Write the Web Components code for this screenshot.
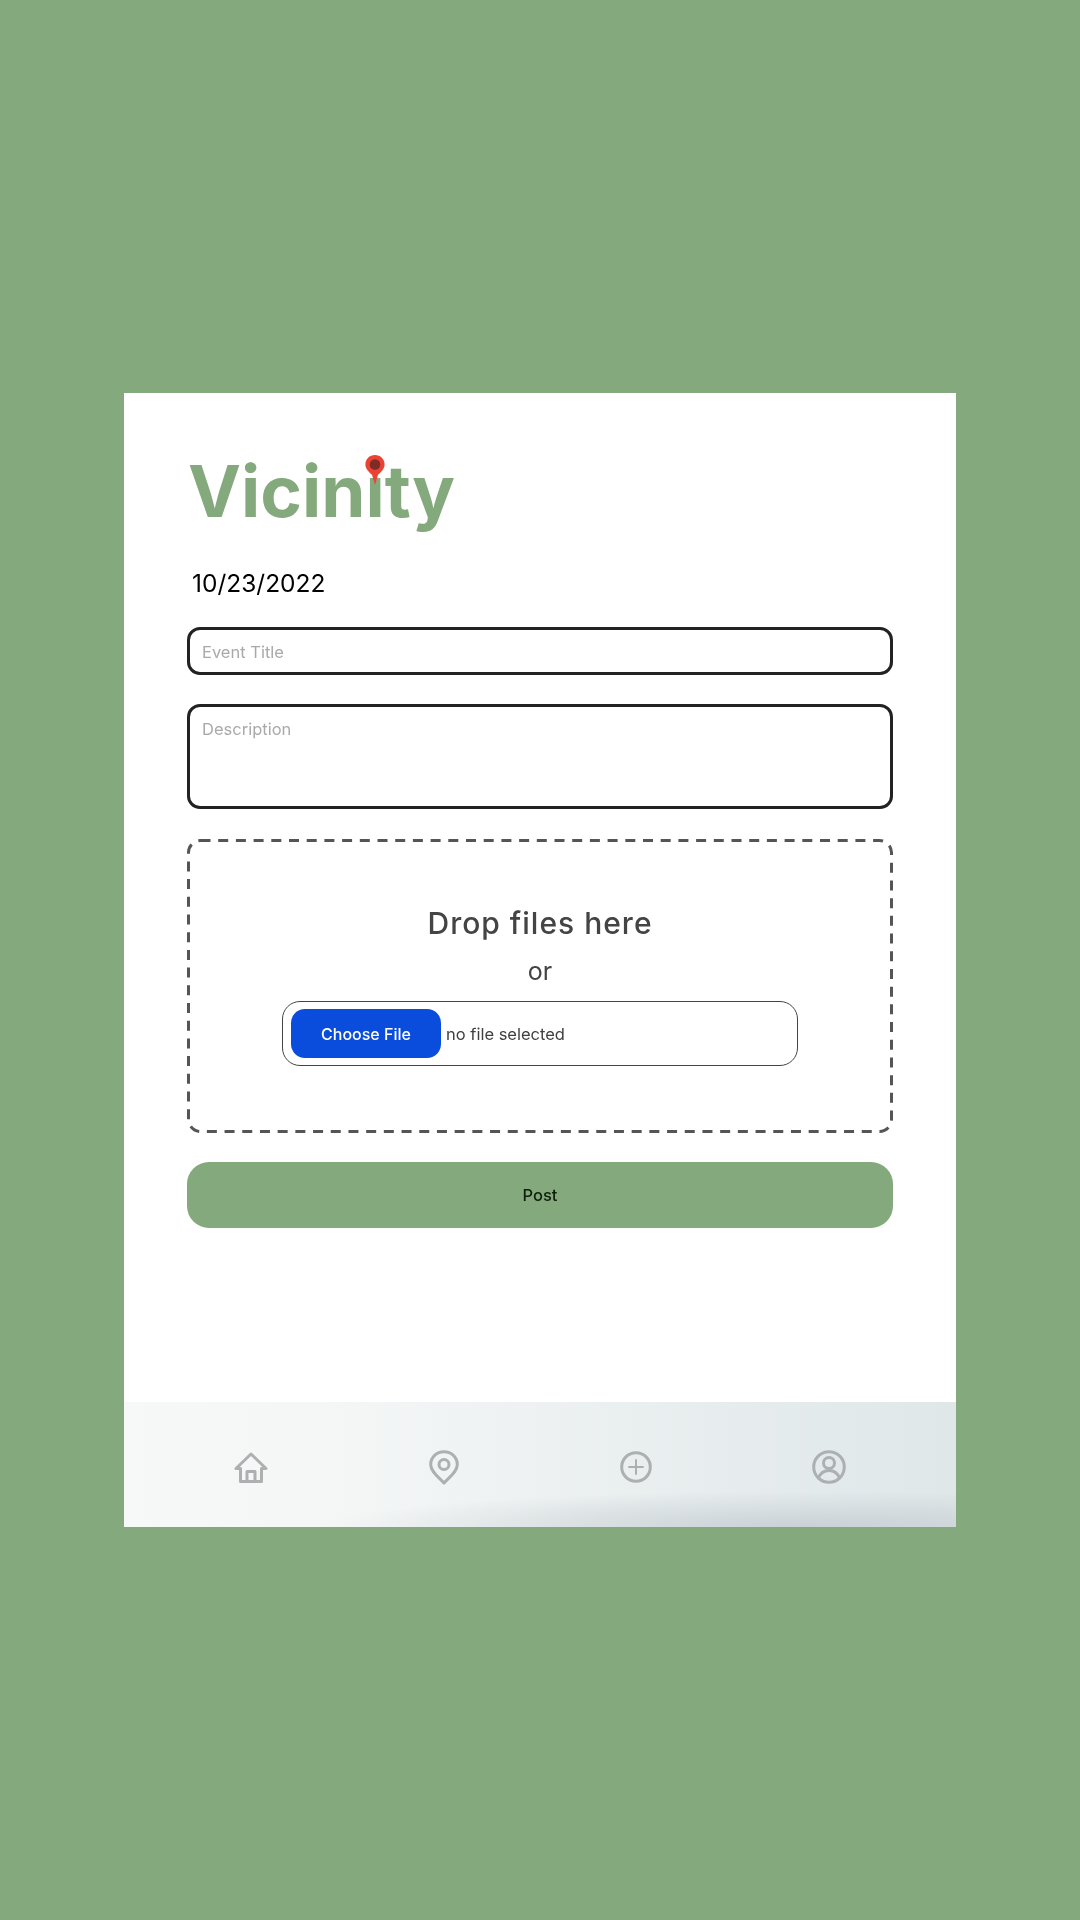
<!DOCTYPE html>
<html>
<head>
<meta charset="utf-8">
<title>Vicinity</title>
<style>
    html, body { margin: 0; height: 100%; }
    body { background: #84a97c; font-family: Inter, "Liberation Sans", sans-serif; }
</style>
</head>
<body>
<vicinity-app>
    <vicinity-logo>Vicinity</vicinity-logo>
    <event-date>10/23/2022</event-date>
    <text-field>Event Title</text-field>
    <text-field tall>Description</text-field>
    <drop-zone>
        <file-picker>no file selected</file-picker>
    </drop-zone>
    <post-button>Post</post-button>
    <tab-bar slot="footer"></tab-bar>
</vicinity-app>

<script>
// Contenedor principal: panel blanco centrado sobre el fondo verde
class VicinityApp extends HTMLElement {
    constructor() {
        super();
        this.attachShadow({ mode: 'open' });
        this.shadowRoot.innerHTML = `
            <style>
                :host { display: flex; height: 1920px; align-items: center; justify-content: center; }
                .panel { width: 832px; height: 1134px; background: #fff; display: flex; flex-direction: column; }
                .form { flex: 1; display: flex; flex-direction: column; padding: 0 63px; filter: blur(.3px); }
            </style>
            <div class="panel">
                <div class="form"><slot></slot></div>
                <slot name="footer"></slot>
            </div>
        `;
    }
}
customElements.define('vicinity-app', VicinityApp);

class VicinityLogo extends HTMLElement {
    constructor() {
        super();
        this.attachShadow({ mode: 'open' });
        this.shadowRoot.innerHTML = `
            <style>
                :host { display: block; position: relative; height: 84px; margin: 56px 0 0 1px; filter: blur(.3px); }
                .word { display: block; font: 700 71px/84px Inter, "Liberation Sans", sans-serif; color: #84a97c; white-space: nowrap; }
                svg { position: absolute; left: 177px; top: 6px; }
            </style>
            <span class="word"><slot></slot></span>
            <svg width="20" height="30" viewBox="0 0 20 30">
                <path d="M10 0C4.500 0 .4 4.200 .4 9.400c0 4.600 4.200 8 6.600 10.400L10 30l3-10.200c2.400-2.400 6.600-5.800 6.600-10.400C19.600 4.200 15.500 0 10 0z" fill="#ea4335"/>
                <circle cx="10" cy="9.500" r="5.300" fill="#7f2b26"/>
            </svg>
        `;
    }
}
customElements.define('vicinity-logo', VicinityLogo);

class EventDate extends HTMLElement {
    constructor() {
        super();
        this.attachShadow({ mode: 'open' });
        this.shadowRoot.innerHTML = `
            <style>
                :host { display: block; margin: 35px 0 0 5px; font: 400 24.500px/30px Inter, "Liberation Sans", sans-serif; color: #000; }
            </style>
            <slot></slot>
        `;
    }
}
customElements.define('event-date', EventDate);

// Campo de texto (con el atributo tall hace de descripcion)
class TextField extends HTMLElement {
    constructor() {
        super();
        this.attachShadow({ mode: 'open' });
        this.shadowRoot.innerHTML = `
            <style>
                :host { display: block; box-sizing: border-box; height: 48px; margin-top: 29px; padding: 12px 12px 0; border: 3.500px solid #222; border-radius: 13px; font: 400 16.500px/20px Inter, "Liberation Sans", sans-serif; color: #a9a9a9; }
                :host([tall]) { height: 105px; }
            </style>
            <slot></slot>
        `;
    }
}
customElements.define('text-field', TextField);

class DropZone extends HTMLElement {
    constructor() {
        super();
        this.attachShadow({ mode: 'open' });
        this.shadowRoot.innerHTML = `
            <style>
                :host { display: flex; flex-direction: column; align-items: center; position: relative; box-sizing: border-box; height: 294px; margin-top: 30px; padding-top: 65px; }
                svg { position: absolute; inset: 0; width: 100%; height: 100%; }
                h2 { margin: 0; font: 500 30px/38px Inter, "Liberation Sans", sans-serif; letter-spacing: 1px; color: #444; }
                p { margin: 13.500px 0 15.500px; font: 400 25px/30px Inter, "Liberation Sans", sans-serif; color: #444; }
            </style>
            <svg viewBox="0 0 706 294" fill="none">
                <rect x="1.500" y="1.500" width="703" height="291" rx="12" stroke="#555" stroke-width="3" stroke-dasharray="10 7.700"/>
            </svg>
            <h2>Drop files here</h2>
            <p>or</p>
            <slot></slot>
        `;
    }
}
customElements.define('drop-zone', DropZone);

class FilePicker extends HTMLElement {
    constructor() {
        super();
        this.attachShadow({ mode: 'open' });
        this.shadowRoot.innerHTML = `
            <style>
                :host { display: flex; align-items: center; box-sizing: border-box; width: 516px; height: 65px; padding: 0 8px; border: 1.500px solid #444; border-radius: 18px; font: 400 16.500px/20px Inter, "Liberation Sans", sans-serif; color: #3f3f3f; background: #fff; }
                .btn { width: 150px; height: 49px; margin-right: 5px; display: flex; align-items: center; justify-content: center; background: #0a4ddc; color: #fff; border-radius: 14px; font-size: 16px; font-weight: 500; }
            </style>
            <span class="btn">Choose File</span>
            <slot></slot>
        `;
    }
}
customElements.define('file-picker', FilePicker);

class PostButton extends HTMLElement {
    constructor() {
        super();
        this.attachShadow({ mode: 'open' });
        this.shadowRoot.innerHTML = `
            <style>
                :host { display: flex; align-items: center; justify-content: center; height: 66px; margin-top: 29px; background: #84a97c; border-radius: 22px; font: 500 16.500px/20px Inter, "Liberation Sans", sans-serif; color: #0f1f0c; }
            </style>
            <slot></slot>
        `;
    }
}
customElements.define('post-button', PostButton);

// Iconos de la barra inferior
const ICONOS = [
    { w: 34, h: 31, box: '0 0 34 31', d: '<path d="M2 16.500L17 2l15 14.500h-4.500V29.500h-21V16.500z"/><path d="M13 29.500V19.500h8V29.500"/>' },
    { w: 30, h: 35, box: '0 0 30 35', d: '<path d="M15 33C11 28 1.700 22.500 1.700 14.500 1.700 7.200 7.700 1.700 15 1.700s13.300 5.500 13.300 12.800C28.300 22.500 19 28 15 33z"/><circle cx="15" cy="14.500" r="5"/>' },
    { w: 32, h: 32, box: '0 0 32 32', d: '<circle cx="16" cy="16" r="14.300"/><path stroke-width="2" d="M16 9v14M9 16h14"/>' },
    { w: 34, h: 34, box: '0 0 34 34', d: '<circle cx="17" cy="17" r="15.300"/><circle cx="17" cy="13" r="5.500"/><path d="M6.500 28c2-5 6-7.500 10.500-7.500S25.500 23 27.500 28"/>' }
];

class TabBar extends HTMLElement {
    constructor() {
        super();
        this.attachShadow({ mode: 'open' });
        this.shadowRoot.innerHTML = `
            <style>
                :host { display: grid; grid-template-columns: repeat(4, 1fr); box-sizing: border-box; height: 125px; padding: 5px 31px 0;
                    background:
                        radial-gradient(ellipse 480px 36px at 82% 100%, rgba(195,203,207,.8), rgba(195,203,207,0)),
                        linear-gradient(90deg, #f7f8f8 0%, #f4f6f6 28%, #eaeff0 60%, #dfe7e9 100%); }
                .tab { display: flex; align-items: center; justify-content: center; }
                svg { fill: none; stroke: #adb0b1; stroke-width: 3; stroke-linejoin: round; stroke-linecap: round; filter: blur(.4px); }
            </style>
            ${ICONOS.map(i => `<div class="tab"><svg width="${i.w}" height="${i.h}" viewBox="${i.box}">${i.d}</svg></div>`).join('')}
        `;
    }
}
customElements.define('tab-bar', TabBar);
</script>
</body>
</html>
